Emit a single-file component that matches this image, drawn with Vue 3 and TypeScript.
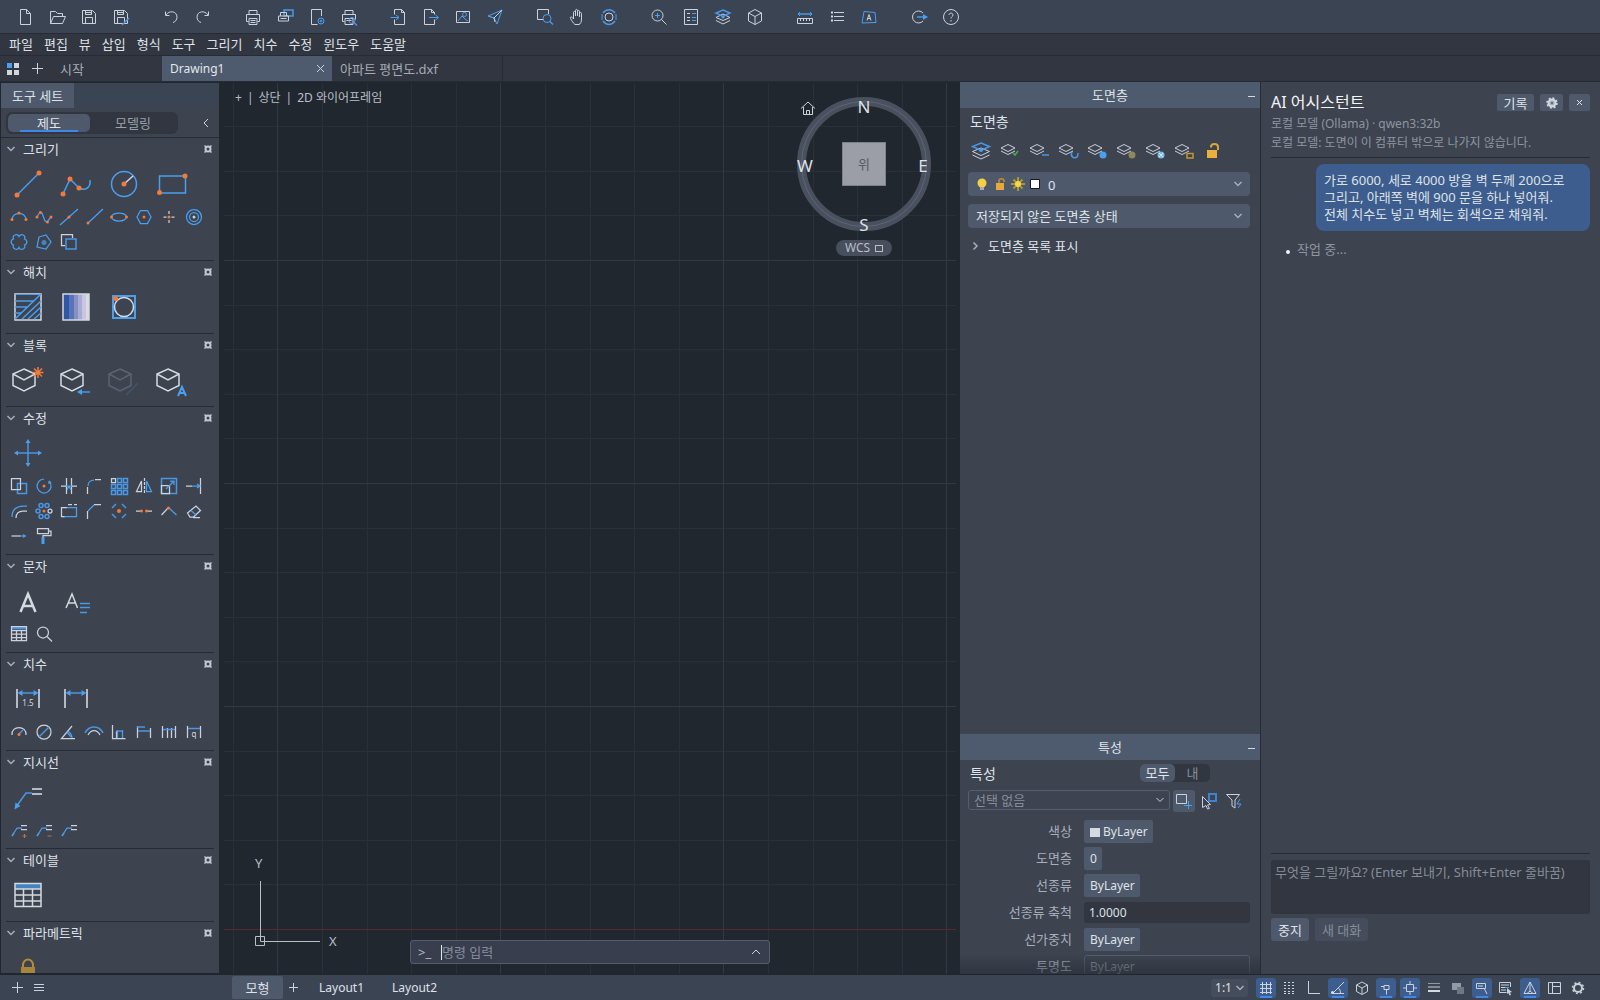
<script setup lang="ts">
import { ref } from 'vue'

interface ToolSection {
  title: string
  big: string[]
  small: string[]
}

// Toolbar glyphs, 20 x 20 grid. w = light stroke, b = blue stroke, o = orange fill.
const bar: Record<string, string> = {
  new: '<path class="w" d="M5.500 2.500h6l4 4v11h-10zM11.500 2.500v4h4"/>',
  open: '<path class="w" d="M3.500 16.500v-12h5l2 2h5v3M3.500 16.500l3-7h12l-3 7z"/>',
  save: '<path class="w" d="M3.500 3.500h10l3 3v10h-13zM6.500 3.500v4h6v-4M6.500 16.500v-6h7v6"/><path class="w" d="M6 5.500h7"/>',
  saveas: '<path class="w" d="M3.500 3.500h10l3 3v10h-13zM6.500 3.500v4h6v-4M6.500 16.500v-6h7v6"/><path class="w" d="M6 5.500h7"/><path class="b2" d="M11 18l7-7"/>',
  undo: '<path class="w" d="M4.500 4.500v4h4M5 8c3-5 11-4 11 2 0 3-1.500 4.500-4 5.500"/>',
  redo: '<path class="w" d="M15.500 4.500v4h-4M15 8c-3-5-11-4-11 2 0 3 1.500 4.500 4 5.500"/>',
  print: '<path class="w" d="M6 7.500v-4h8v4M5.500 14.500h-2v-7h13v7h-2M6 11.500h8v6H6zM7.500 13.500h5M7.500 15.500h5"/>',
  batch: '<path class="b2" d="M9 3h9v6H9z"/><path class="w" d="M5.500 9V5.500h6V9M3.500 9h10v5h-10zM5.500 11.500h6"/>',
  pageset: '<path class="w" d="M14.500 9V2.500h-10v15h6"/><circle class="b" cx="14" cy="14" r="3"/><circle class="b" cx="14" cy="14" r="1"/>',
  preview: '<path class="w" d="M6 7.500v-4h8v4M5.500 14.500h-2v-7h13v5M6 11.500h8v6H6zM7.500 13.500h5"/><circle class="b" cx="13" cy="13.500" r="3"/><path class="b2" d="M15 15.500l3 3"/>',
  import: '<path class="w" d="M5.500 7.500v-5h7l3 3v12h-10v-5M12.500 2.500v3h3"/><path class="b" d="M1.500 10.500h8M7 8l3 2.500L7 13"/>',
  export: '<path class="w" d="M13.500 7.500v-2l-3-3h-7v15h10v-5M10.500 2.500v3h3"/><path class="b" d="M8 10.500h9M14.500 8l3 2.500-3 2.500"/>',
  image: '<path class="w" d="M3.500 4.500h13v11h-13z"/><path class="b" d="M5 14l4-5 3 3 3 2"/><circle class="b" cx="11.500" cy="7.500" r="2"/>',
  send: '<path class="b" d="M3 9l14-6-5 14-3-6zM9 11l-6-2"/><path class="w" d="M17 3l-8 8 1 4"/>',
  zoomwin: '<path class="w" d="M8.500 12.500h-6v-10h11V7"/><circle class="b" cx="12" cy="11.500" r="4"/><path class="b2" d="M15 14.500l3 3"/>',
  pan: '<path class="w" d="M6.500 12V5.500c0-1.500 2-1.500 2 0V9M8.500 9V3.500c0-1.500 2-1.500 2 0V9M10.500 9V4.500c0-1.500 2-1.500 2 0V10M12.500 10V6.500c0-1.500 2-1.500 2 0V12c0 3-1 5-2.500 5.500h-4C6 16 5 14 3.500 11.500c-.8-1.500 1-2 1.800-.9L6.500 12"/>',
  orbit: '<circle class="w" cx="10" cy="10" r="4"/><path class="b2" d="M4 6C7 1.500 13 1.500 16 6M4 14c3 4.500 9 4.500 12 0"/><path class="b" d="M17 7v6M3 7v6"/>',
  zoomin: '<circle class="w" cx="8.500" cy="8.500" r="5.500"/><path class="w" d="M12.500 12.500l5 5"/><path class="b" d="M8.500 6v5M6 8.500h5"/>',
  props: '<path class="w" d="M3.500 2.500h13v15h-13z"/><path class="w" d="M6 6.500h3M6 10.500h3M6 13.500h3"/><path class="b" d="M11 6.500h4M11 10.500h4M11 13.500h4"/>',
  layers: '<path class="w" d="M10 7l7 3.500-7 3-7-3zM3 13.500l7 3.500 7-3.500"/><path class="b2" d="M10 3l7 3-7 3.500L3 6z"/><circle cx="10" cy="10" r="1.500" fill="#4a9ff0"/>',
  cube: '<path class="w" d="M10 2.500l6.500 3.500v8L10 17.500 3.500 14V6zM3.500 6L10 9.500 16.500 6M10 9.500v8"/>',
  measure: '<path class="b2" d="M3 7h14"/><path class="b" d="M5 5L3 7l2 2M15 5l2 2-2 2"/><path class="w" d="M2.500 11.500h15v5h-15zM5.500 12v2M8.500 12v2M11.500 12v2M14.500 12v2"/>',
  list: '<path class="w" d="M7 5.500h10M7 9.500h10M7 13.500h10"/><path class="w2" d="M4 5.500h2M4 9.500h2M4 13.500h2"/>',
  textfit: '<path class="b" d="M5 4.500l11 1 1 10-14 .500z"/><path class="w" d="M8 13.500l2-6 2 6M8.500 11.500h3"/>',
  logout: '<path class="w" d="M14 6a6 6 0 1 0 0 8"/><path class="b2" d="M8 10h8"/><path d="M14 7l5 3-5 3z" fill="#4a9ff0"/>',
  help: '<circle class="w" cx="10" cy="10" r="7.500"/><path class="w" d="M8 8c0-2.500 4-2.500 4 0 0 1.500-2 1.500-2 3.500"/><path class="w" d="M10 13v1.500"/>',
}

const barGroups: string[][] = [
  ['new', 'open', 'save', 'saveas'],
  ['undo', 'redo'],
  ['print', 'batch', 'pageset', 'preview'],
  ['import', 'export', 'image', 'send'],
  ['zoomwin', 'pan', 'orbit'],
  ['zoomin', 'props', 'layers', 'cube'],
  ['measure', 'list', 'textfit'],
  ['logout', 'help'],
]

const menus = ['파일', '편집', '뷰', '삽입', '형식', '도구', '그리기', '치수', '수정', '윈도우', '도움말']

const box = '<path class="wl" d="M12 5l11 5v11.500L12 27 1 21.500V10zM1 10l11 6 11-6"/>'

// Large palette glyphs, 32 x 32 grid.
const big: Record<string, string> = {
  line: '<path class="bl" d="M5 27L27 5"/><circle class="o" cx="5" cy="27" r="2.500"/><circle class="o" cx="27" cy="5" r="2.500"/>',
  pline: '<path class="bl" d="M3 26l7-15 9 9c6 3 12 0 11-8"/><circle class="o" cx="3" cy="26" r="2.500"/><circle class="o" cx="10" cy="11" r="2.500"/><circle class="o" cx="19" cy="20" r="2.500"/>',
  circle: '<circle class="bl" cx="16" cy="16" r="12.500"/><path class="wl" d="M16 16l9-8"/><circle class="o" cx="16" cy="16" r="2.500"/>',
  rect: '<path class="bl" d="M3.500 8h26v17h-26z"/><circle class="o" cx="3.500" cy="24.500" r="2.500"/><circle class="o" cx="29" cy="8" r="2.500"/>',
  hatch: '<path class="wl" d="M3 3h26v26H3z"/><path class="bl" d="M3 28L29 3M3 10h19M3 16h13M3 22h7M10 28L29 10M16 28l13-12M22 28l7-6"/><path class="b" d="M3.500 3.500h25"/>',
  gradient: '<path fill="#2f57a8" d="M3 3h6v26H3z"/><path fill="#5c72b6" d="M9 3h5v26H9z"/><path fill="#8590c5" d="M14 3h4v26h-4z"/><path fill="#a9abd4" d="M18 3h4v26h-4z"/><path fill="#cbc4e0" d="M22 3h4v26h-4z"/><path fill="#dcd9e6" d="M26 3h3v26h-3z"/><path class="wl" d="M3 3h26v26H3z"/>',
  boundary: '<path class="b3l" d="M5 5h22v22H5z"/><circle class="wl" cx="16" cy="16" r="9.500"/><circle class="o" cx="7.500" cy="7.500" r="2.500"/>',
  blockNew: box + '<path stroke="#f27a3a" stroke-width="1.500" d="M26 3v11M20.500 8.500h11M22 4.500l8 8M30 4.500l-8 8"/>',
  blockIns: box + '<path class="b2" d="M19 28h11"/><path d="M17 28l5-3v6z" fill="#4a9ff0"/>',
  blockEdit: '<g opacity=".22">' + box + '<path class="b2" d="M30 19L18 31"/></g>',
  blockAttr: box + '<path class="b3l" d="M22 32l4-9 4 9M23.500 29h5"/>',
  move: '<path class="b2" d="M16 4v24M4 16h24"/><path fill="#4a9ff0" d="M16 2l2.500 4h-5zM16 30l2.500-4h-5zM2 16l4-2.500v5zM30 16l-4-2.500v5z"/>',
  mtext: '<path class="wh" d="M8.500 27L16 9l7.500 18M11 21h10"/>',
  text: '<path class="wl" d="M6 23L12 9l5.500 14M8 18h8"/><path class="b2" d="M20 18.500h10M20 22.500h10M20 27.500h7"/>',
  dim: '<path class="w2g" d="M5 6v19M27 6v19"/><path class="b2" d="M7 10h18"/><path fill="#4a9ff0" d="M5.500 10l5-3v6zM26.500 10l-5-3v6z"/><text x="16" y="23" text-anchor="middle">1.5</text>',
  dimLin: '<path class="w2g" d="M5 6v19M27 6v19"/><path class="b2" d="M7 10h18"/><path fill="#4a9ff0" d="M5.500 10l5-3v6zM26.500 10l-5-3v6z"/>',
  leader: '<path class="b2" d="M4 26L14 12h6"/><path d="M2.500 28.500l1-7 5 3.500z" fill="#4a9ff0"/><path class="w2g" d="M20 8h10M20 13h10"/>',
  table: '<path class="b5" d="M3 7.500h26"/><path class="wl" d="M3 4.500h26v23H3zM3 10h26M3 16h26M3 22h26M11.500 10v17M20.500 10v17"/>',
  lock: '<path d="M11 15v-2a5 5.500 0 0 1 10 0v2" stroke="#b58a3a" stroke-width="2"/><path fill="#a8843c" d="M9 15h14v11H9z"/>',
}

const stackW = '<path class="w" d="M8 2.500l7 3.500-7 3.500L1 6zM1 9l7 3.500L15 9"/>'

// Small palette glyphs, 18 x 18 grid.
const small: Record<string, string> = {
  arc: '<path class="b" d="M2 12C2 3 16 3 16 12"/><circle class="o" cx="2" cy="11.500" r="1.500"/><circle class="o" cx="9" cy="5" r="1.500"/><circle class="o" cx="16" cy="11.500" r="1.500"/>',
  spline: '<path class="b" d="M2 9l3-5 2 1 3 8 2 1 4-5"/><circle class="o" cx="2" cy="9" r="1.500"/><circle class="o" cx="5.500" cy="4.500" r="1.500"/><circle class="o" cx="12.500" cy="14" r="1.500"/><circle class="o" cx="16" cy="9" r="1.500"/>',
  xline: '<path class="b" d="M0 17L18 1"/><circle class="o" cx="9" cy="9" r="1.500"/>',
  ray: '<path class="b" d="M3 15L18 1"/><circle class="o" cx="3" cy="15" r="1.500"/>',
  ellipse: '<ellipse class="b" cx="9" cy="9" rx="7.500" ry="4"/><circle class="o" cx="1.500" cy="9" r="1.500"/><circle class="o" cx="16.500" cy="9" r="1.500"/>',
  polygon: '<path class="b" d="M5.500 2.500h7l3.500 6.500-3.500 6.500h-7L2 9z"/><circle class="o" cx="9" cy="9" r="1.500"/>',
  point: '<path class="w" d="M9 3v3M9 12v3M3.500 9h3M11.500 9h3"/><circle class="o" cx="9" cy="9" r="1.500"/>',
  donut: '<circle class="b" cx="9" cy="9" r="7.500"/><circle class="b" cx="9" cy="9" r="4.500"/><circle cx="9" cy="9" r="1.500" fill="#c9d0da"/>',
  cloud: '<path class="b" d="M9 3.500A3 3 0 0 1 14.500 6A3.100 3.100 0 0 1 14.500 12A3 3 0 0 1 9 14.500A3 3 0 0 1 3.500 12A3.100 3.100 0 0 1 3.500 6A3 3 0 0 1 9 3.500z"/>',
  wipeout: '<path class="b" d="M4 4l7-2 5 7-5 7-9-2z"/><circle cx="9" cy="9.500" r="2.500" fill="#4a82bf"/>',
  copyobj: '<path class="w" d="M5 12.500H1.500v-11h11V5"/><path class="b2" d="M6 6h10v10H6z"/>',
  copy: '<path class="w" d="M7 12.500H1.500v-11h9V6"/><path class="b2" d="M7.500 6.500h9v10h-9z"/><path class="w" d="M10.500 6v6.500H7"/>',
  rotate: '<path class="b" d="M9 2a7 7 0 1 0 5 2M14 4v3M14 4l2 2"/><circle class="o" cx="9" cy="9" r="1.500"/>',
  trim: '<path class="w" d="M6.500 1v16M11.500 1v16M1 9h5M12 9h5"/><path class="b" d="M6 9h6M9 9l-2 4M9 9l2 4"/>',
  fillet: '<path class="b" d="M3 9c0-4 3-6 6-6"/><path class="w" d="M2.500 10v7M10 2.500h6"/>',
  array: '<path class="w" d="M1.500 1.500h4v4h-4z"/><path class="b2" d="M7.500 1.500h4v4h-4zM13.500 1.500h4v4h-4zM1.500 7.500h4v4h-4zM7.500 7.500h4v4h-4zM13.500 7.500h4v4h-4zM1.500 13.500h4v4h-4zM7.500 13.500h4v4h-4zM13.500 13.500h4v4h-4z"/>',
  mirror: '<path class="w" d="M6.500 4v10.500h-5z"/><path class="b" d="M11.500 4v10.500h5z"/><path class="w" stroke-dasharray="3 1" d="M9.500 1v16"/>',
  scale: '<path class="b2" d="M1.500 1.500h15v15h-15z"/><path class="w" d="M1.500 8.500h8v8h-8z"/><path class="b" d="M6 12l8-8M10 4h4v4"/>',
  extend: '<path class="w" d="M1 9h6M15.500 1v16"/><path class="b" d="M7 9h8M12 7l3 2-3 2"/>',
  offset: '<path class="b" d="M2 15c0-7 4-11 12-11h3"/><path class="w" d="M6 16c0-5 3-7 7-7h4"/>',
  arraypolar: '<circle class="b2" cx="6" cy="3.500" r="2"/><circle class="b2" cx="12" cy="3.500" r="2"/><circle class="b2" cx="3" cy="9" r="2"/><circle class="w" cx="15" cy="9" r="2"/><circle class="b2" cx="6" cy="14.500" r="2"/><circle class="b2" cx="12" cy="14.500" r="2"/><circle class="o" cx="9" cy="9" r="1.500"/>',
  stretch: '<path class="b" d="M7 5.500h9.500v9h-14"/><path class="w" d="M7 5.500H1.500v9h3M8 2.500h4M14 2.500h3"/>',
  chamfer: '<path class="b" d="M3 9l6-6"/><path class="w" d="M2.500 9v8M9 2.500h7"/>',
  explode: '<path class="b2" d="M6 2L2 6M12 2l4 4M6 16l-4-4M12 16l4-4"/><circle class="o" cx="9" cy="9" r="2"/>',
  join: '<path class="w" d="M1 9h5M12 9h5"/><circle class="o" cx="6.500" cy="9" r="1.500"/><circle class="o" cx="11.500" cy="9" r="1.500"/>',
  lengthen: '<path class="w" d="M1.500 13L8 6"/><path class="b" d="M9 6l7.500 7"/><circle class="o" cx="8.500" cy="6" r="1.500"/>',
  erase: '<path class="w" d="M2.500 11L11 4l4.500 4.500L8.500 15H5zM8 15.500h7"/><path class="b" d="M6 8.500l5 4.500"/>',
  breakline: '<path class="w" d="M1.500 9h9"/><path class="b" d="M10 9h5"/><path fill="#4a9ff0" d="M13 7l3.500 2-3.500 2z"/>',
  match: '<path class="w" d="M2.500 1.500h11v5h-11zM13.500 4h2.500v4.500H8V11"/><path fill="#4a9ff0" d="M6.500 10h3v7h-3z"/>',
  tablesm: '<path class="b3" d="M1.500 3h15"/><path class="w" d="M1.500 1.500h15v14h-15zM1.500 5.500h15M1.500 9h15M1.500 12.500h15M6.500 5v10M11.500 5v10"/>',
  find: '<circle class="w" cx="8" cy="7.500" r="5.500"/><path class="w" d="M12 11.500l5 5"/>',
  radius: '<path class="w" d="M2 12C1 2 17 2 16 12"/><path class="b2" d="M9 11l4-4"/><circle class="o" cx="9" cy="11.500" r="1.500"/>',
  diameter: '<circle class="w" cx="9" cy="9" r="7"/><path class="b2" d="M4 14L14 4"/>',
  angular: '<path class="w" d="M12 3L1.500 15.500H15"/><path class="b" d="M8 8c2 1.500 4 4 4 7M7 9l4 5"/>',
  arclen: '<path class="b2" d="M0 10C4 2 14 2 18 10"/><path class="w" d="M3 12c3-6 9-6 12 0"/>',
  ordinate: '<path class="w" d="M2.500 2v13.500h13M6.500 8v7"/><path class="b" d="M7.500 7v8M12.500 7v8M6 8h7"/>',
  baseline: '<path class="w" d="M2.500 3v12M15.500 5v10"/><path class="b2" d="M2 4h8M3 8h12"/>',
  continuous: '<path class="w" d="M2.500 3v12M7.500 5v10M11.500 5v10M15.500 3v12"/><path class="b2" d="M3 6.500h12"/>',
  quick: '<path class="w" d="M2.500 3v12M15.500 3v12"/><path class="b2" d="M3 5.500h12"/><text x="9" y="14" text-anchor="middle">q</text>',
  leadAdd: '<path class="b" d="M2 15L7 7h5"/><path class="b2" d="M2 15l2-3"/><path class="w" d="M11 4.500h6M11 8.500h6"/><path stroke="#c9703f" d="M14.500 13v4M12.500 15h4"/>',
  leadRem: '<path class="b" d="M2 15L7 7h5"/><path class="b2" d="M2 15l2-3"/><path class="w" d="M11 4.500h6M11 8.500h6"/><path stroke="#c9703f" d="M12.500 15h4"/>',
  leadAlign: '<path class="b" d="M2 15L7 7h5"/><path class="b2" d="M2 15l2-3"/><path class="w" d="M11 4.500h6M11 8.500h6"/>',
}

const sections: ToolSection[] = [
  { title: '그리기', big: ['line', 'pline', 'circle', 'rect'], small: ['arc', 'spline', 'xline', 'ray', 'ellipse', 'polygon', 'point', 'donut', 'cloud', 'wipeout', 'copyobj'] },
  { title: '해치', big: ['hatch', 'gradient', 'boundary'], small: [] },
  { title: '블록', big: ['blockNew', 'blockIns', 'blockEdit', 'blockAttr'], small: [] },
  { title: '수정', big: ['move'], small: ['copy', 'rotate', 'trim', 'fillet', 'array', 'mirror', 'scale', 'extend', 'offset', 'arraypolar', 'stretch', 'chamfer', 'explode', 'join', 'lengthen', 'erase', 'breakline', 'match'] },
  { title: '문자', big: ['mtext', 'text'], small: ['tablesm', 'find'] },
  { title: '치수', big: ['dim', 'dimLin'], small: ['radius', 'diameter', 'angular', 'arclen', 'ordinate', 'baseline', 'continuous', 'quick'] },
  { title: '지시선', big: ['leader'], small: ['leadAdd', 'leadRem', 'leadAlign'] },
  { title: '테이블', big: ['table'], small: [] },
  { title: '파라메트릭', big: ['lock'], small: [] },
]

// Layer tool glyphs, 20 x 18 grid.
const layerTools: string[] = [
  '<path class="w" d="M10 6l8.500 3.500-8.500 4-8.500-4zM1.500 13l8.500 4 8.500-4"/><path class="b2" d="M10 1l8.500 3.500L10 8.500 1.500 4.500z"/><circle cx="10" cy="8" r="2" fill="#4a9ff0"/>',
  stackW + '<path stroke="#4fa65a" stroke-width="1.500" d="M13 11l2 2 3-4"/>',
  stackW + '<path class="b2" d="M13 13h7"/>',
  stackW + '<path class="b2" d="M14 10c-2 4 1 7 5 5 1-1 1-3 1-4"/>',
  stackW + '<circle cx="16" cy="13" r="3.500" fill="#4a9ff0"/>',
  stackW + '<circle cx="16" cy="13" r="3.500" fill="#8a8a5c"/>',
  stackW + '<circle cx="16" cy="13" r="3.500" fill="#7fbbe8"/><path stroke="#d5e8f7" d="M14 11l4 4M18 11l-4 4"/>',
  stackW + '<path stroke="#c4953a" stroke-width="1.500" d="M13 11.500h6v4.500h-6z"/>',
  '<path stroke="#d9a63c" stroke-width="2" d="M8 5.500V5c0-4 7-4 7 0v3"/><path fill="#e9b03c" d="M4 8h10v8H4z"/>',
]

// Status bar toggles, 20 x 20 grid.
const toggles: { on: boolean; art: string }[] = [
  { on: true, art: '<path class="w" d="M6.500 4v12M10.500 4v12M14.500 4v12M4 6.500h12M4 10.500h12M4 14.500h12"/>' },
  { on: false, art: '<path class="w" stroke-dasharray="2 2" d="M4 4.500h12M4 7.500h12M4 10.500h12M4 13.500h12M4 15.500h12"/>' },
  { on: false, art: '<path class="w" d="M4.500 3v12.500H16"/>' },
  { on: true, art: '<path class="w" d="M16 4L4.500 15.500H16M10 9.500c2 1.500 2.500 3.500 2.500 6"/><circle cx="4.500" cy="14.500" r="1.500" fill="#dfe3ea"/>' },
  { on: false, art: '<path class="w" d="M10 4l5.500 3v6.500L10 16.500l-5.500-3V7zM4.500 7L10 10l5.500-3M10 10v6"/>' },
  { on: true, art: '<path class="w" d="M5 8.500h3M10.500 12v4.500M8 7.500h5v4H8z"/>' },
  { on: true, art: '<path class="w" d="M6.500 6.500h7v7h-7zM10 3v3M10 14v3M3 10h3M14 10h3"/>' },
  { on: false, art: '<path stroke="#9299a6" d="M4 5.500h12"/><path class="w" d="M4 9h12"/><path class="w3" d="M4 13h12"/>' },
  { on: false, art: '<path fill="#9399a5" d="M4 5h9v7H4z"/><path fill="#6f7684" d="M9 9h7v7H9z"/>' },
  { on: true, art: '<path class="w" d="M4.500 5.500h9v5h-9zM6 8h5M12 10l3 6"/>' },
  { on: false, art: '<path class="w" d="M14.500 9V4.500h-11v10h7M5 7h8M5 9.500h8M5 12h5"/><path class="b" d="M9 9.500h4"/><path fill="#c9d0da" d="M11 10l5 4-2 .500 1 2.500-1.500.500-1-2.500-1.500 1z"/>' },
  { on: true, art: '<path class="w" d="M10 4l6 11.500H4zM10 4v9M10 13l-3 2.500M10 13l3 2.500"/>' },
  { on: false, art: '<path class="w" d="M4.500 4.500h12v11h-12zM8.500 4.500v11M8.500 8.500h8"/>' },
  { on: false, art: '<circle cx="10" cy="10" r="4" stroke="#c9d0da" stroke-width="2"/><circle cx="10" cy="10" r="5.500" stroke="#c9d0da" stroke-width="1.500" stroke-dasharray="2 2.300"/>' },
]

const linetypeScale = ref('1.0000')
</script>

<template>
  <div class="app">
    <header class="toolbar">
      <div v-for="(g, i) in barGroups" :key="i" class="group">
        <button v-for="n in g" :key="n" class="tool" :aria-label="n">
          <svg class="ic" width="20" height="20" viewBox="0 0 20 20" v-html="bar[n]" />
        </button>
      </div>
    </header>

    <nav class="menubar">
      <button v-for="m in menus" :key="m">{{ m }}</button>
    </nav>

    <div class="tabs">
      <button class="home" aria-label="apps">
        <svg width="12" height="12" viewBox="0 0 12 12"><path fill="#4a9ff0" d="M0 0h5v5H0z" /><path fill="#d0d4db" d="M7 0h5v5H7zM0 7h5v5H0zM7 7h5v5H7z" /></svg>
      </button>
      <button class="add" aria-label="new tab">
        <svg class="ic" width="11" height="11" viewBox="0 0 11 11"><path class="w" d="M5.500 0v11M0 5.500h11" /></svg>
      </button>
      <button class="tab start">시작</button>
      <div class="tab active">
        <span class="latin">Drawing1</span>
        <button aria-label="close">
          <svg class="ic" width="9" height="9" viewBox="0 0 9 9"><path class="w" d="M1 1l7 7M8 1L1 8" /></svg>
        </button>
      </div>
      <button class="tab file">아파트 평면도.dxf</button>
    </div>

    <main class="work">
      <aside class="tools">
        <div class="tools-head"><span>도구 세트</span></div>
        <div class="mode">
          <div class="seg">
            <button class="on">제도</button>
            <button>모델링</button>
          </div>
          <button class="collapse" aria-label="collapse">
            <svg class="ic" width="6" height="10" viewBox="0 0 6 10"><path class="w" d="M5 1L1 5l4 4" /></svg>
          </button>
        </div>
        <div class="sections">
          <section v-for="s in sections" :key="s.title">
            <h3>
              <svg class="ic" width="8" height="6" viewBox="0 0 8 6"><path class="g" d="M.5 1L4 4.500 7.500 1" /></svg>
              <span>{{ s.title }}</span>
              <svg width="8" height="8" viewBox="0 0 8 8" fill="none"><circle cx="4" cy="4" r="2.500" stroke="#c3cad4" stroke-width="2" /><path stroke="#c3cad4" stroke-width="1.500" d="M.5.500l1.500 1.500M7.500.500L6 2M.5 7.500L2 6M7.500 7.500L6 6" /></svg>
            </h3>
            <div class="bigs">
              <button v-for="n in s.big" :key="n" :aria-label="n">
                <svg class="ic" width="32" height="32" viewBox="0 0 32 32" v-html="big[n]" />
              </button>
            </div>
            <div v-if="s.small.length" class="smalls">
              <button v-for="n in s.small" :key="n" :aria-label="n">
                <svg class="ic" width="18" height="18" viewBox="0 0 18 18" v-html="small[n]" />
              </button>
            </div>
          </section>
        </div>
      </aside>

      <div class="canvas">
        <div class="grid"></div>
        <div class="viewlabel"><span>+</span><span>|</span><span>상단</span><span>|</span><span>2D 와이어프레임</span></div>

        <div class="compass">
          <svg class="ring" width="134" height="134" viewBox="0 0 134 134" fill="none">
            <circle cx="67" cy="67" r="62.500" stroke="#49515f" stroke-width="9" />
            <circle cx="67" cy="67" r="62.500" stroke="#5c6676" />
          </svg>
          <svg class="house ic" width="14" height="14" viewBox="0 0 14 14"><path class="w" d="M0 7.500L7 1l7 6.500M2.500 6v7.500h9V6M5.500 13V9.500h3V13" /></svg>
          <b class="n">N</b><b class="s">S</b><b class="e">E</b><b class="w">W</b>
          <button class="top">위</button>
          <button class="wcs">WCS <i></i></button>
        </div>

        <div class="ucs">
          <span>Y</span>
          <svg width="66" height="66" viewBox="0 0 66 66" fill="none" stroke="#b9bfc9"><path d="M5.500 0v60.500H65M.5 55.500h9v9h-9z" /></svg>
          <span class="x">X</span>
        </div>

        <div class="command">
          <span class="prompt">&gt;_</span>
          <i class="caret"></i>
          <input aria-label="명령" placeholder="명령 입력" />
          <svg class="ic" width="10" height="6" viewBox="0 0 10 6"><path class="w" d="M1 5l4-4 4 4" /></svg>
        </div>
      </div>

      <aside class="palettes">
        <section class="layers">
          <h2>도면층<button aria-label="minimize"></button></h2>
          <h4>도면층</h4>
          <div class="layer-tools">
            <button v-for="(a, i) in layerTools" :key="i" :aria-label="'layer ' + i">
              <svg class="ic" width="20" height="18" viewBox="0 0 20 18" v-html="a" />
            </button>
          </div>
          <button class="drop">
            <svg width="72" height="16" viewBox="0 0 72 16" fill="none">
              <circle cx="6" cy="7" r="4.500" fill="#f7cf3f" /><path fill="#a7abb5" d="M4 11h4v3H4z" />
              <path stroke="#c08d2c" stroke-width="1.500" d="M23 7V5c0-3 5-3 5 0v1" /><path fill="#e9a83a" d="M20 7h8v7h-8z" />
              <path stroke="#a8953d" stroke-width="2" d="M42 1v14M35 8h14M37.500 3.500l9 9M46.500 3.500l-9 9" /><circle cx="42" cy="8" r="3" fill="#f9d648" />
              <path fill="#fff" stroke="#15181d" d="M54.500 3.500h9v9h-9z" />
            </svg>
            <span class="latin">0</span>
            <svg class="ic chev" width="8" height="6" viewBox="0 0 8 6"><path class="g" d="M.5 1L4 4.500 7.500 1" /></svg>
          </button>
          <button class="drop">
            <span>저장되지 않은 도면층 상태</span>
            <svg class="ic chev" width="8" height="6" viewBox="0 0 8 6"><path class="g" d="M.5 1L4 4.500 7.500 1" /></svg>
          </button>
          <button class="expand">
            <svg class="ic" width="5" height="8" viewBox="0 0 5 8"><path class="g" d="M.5.5L4 4 .5 7.500" /></svg>
            <span>도면층 목록 표시</span>
          </button>
        </section>

        <section class="props">
          <h2>특성<button aria-label="minimize"></button></h2>
          <div class="props-title">
            <h4>특성</h4>
            <div class="pick"><button class="on">모두</button><button>내</button></div>
          </div>
          <div class="selrow">
            <div class="selwrap">
              <select aria-label="선택"><option>선택 없음</option></select>
              <svg class="ic" width="8" height="6" viewBox="0 0 8 6"><path class="w" d="M.5 1L4 4.500 7.500 1" /></svg>
            </div>
            <button class="on" aria-label="add to selection"><svg class="ic" width="18" height="18" viewBox="0 0 18 18"><path class="w" d="M1.500 2.500h10v9h-10z" /><path class="b" d="M13.500 9v8M9 13.500h8" /></svg></button>
            <button aria-label="select objects"><svg class="ic" width="18" height="18" viewBox="0 0 18 18"><path stroke="#3f83cf" stroke-width="2" d="M9 2h7v7H9z" /><path fill="#3c424f" stroke="#c9d0da" d="M2.500 4.500l8 8-3 .500 2 3.500-2 .500-1.500-3.500-3.500 2z" /></svg></button>
            <button aria-label="quick select"><svg class="ic" width="18" height="18" viewBox="0 0 18 18"><path class="w" d="M1.500 2.500h13L10 8v8l-3-2V8z" /><path class="b" d="M15 7l-3 5h4l-3 4" /></svg></button>
          </div>
          <dl>
            <dt>색상</dt><dd><button class="latin"><i></i>ByLayer</button></dd>
            <dt>도면층</dt><dd><button class="latin">0</button></dd>
            <dt>선종류</dt><dd><button class="latin">ByLayer</button></dd>
            <dt><label for="lts">선종류 축척</label></dt><dd><input id="lts" v-model="linetypeScale" class="latin" /></dd>
            <dt>선가중치</dt><dd><button class="latin">ByLayer</button></dd>
            <dt><label for="trans">투명도</label></dt><dd><input id="trans" class="latin ghost" placeholder="ByLayer" /></dd>
          </dl>
        </section>
      </aside>

      <aside class="ai">
        <div class="ai-head">
          <h1>AI 어시스턴트</h1>
          <button>기록</button>
          <button class="sq" aria-label="settings"><svg width="12" height="12" viewBox="0 0 12 12" fill="none"><circle cx="6" cy="6" r="3.500" fill="#a3aab6" stroke="#d5d9e0" stroke-width="2" /><circle cx="6" cy="6" r="5" stroke="#d5d9e0" stroke-width="1.500" stroke-dasharray="2 1.900" /><circle cx="6" cy="6" r="1" fill="#4e586a" /></svg></button>
          <button class="cl" aria-label="close"><svg width="7" height="7" viewBox="0 0 7 7" stroke="#dfe3ea"><path d="M1 1l5 5M6 1L1 6" /></svg></button>
        </div>
        <p class="meta">로컬 모델 (Ollama) · qwen3:32b</p>
        <p class="meta note">로컬 모델: 도면이 이 컴퓨터 밖으로 나가지 않습니다.</p>
        <div class="chat">
          <div class="bubble">가로 6000, 세로 4000 방을 벽 두께 200으로<br />그리고, 아래쪽 벽에 900 문을 하나 넣어줘.<br />전체 치수도 넣고 벽체는 회색으로 채워줘.</div>
          <div class="working"><i></i><span>작업 중...</span></div>
        </div>
        <div class="compose">
          <textarea aria-label="메시지" placeholder="무엇을 그릴까요? (Enter 보내기, Shift+Enter 줄바꿈)"></textarea>
          <div class="acts"><button>중지</button><button disabled>새 대화</button></div>
        </div>
      </aside>
    </main>

    <footer class="status">
      <div class="st-left">
        <button aria-label="add"><svg class="ic" width="11" height="11" viewBox="0 0 11 11"><path class="w" d="M5.500 0v11M0 5.500h11" /></svg></button>
        <button aria-label="menu"><svg class="ic" width="10" height="9" viewBox="0 0 10 9"><path class="w" d="M0 1.500h10M0 4.500h10M0 7.500h10" /></svg></button>
      </div>
      <button class="lay on">모형</button>
      <button class="plus" aria-label="add layout"><svg class="ic" width="9" height="9" viewBox="0 0 9 9"><path class="w" d="M4.500 0v9M0 4.500h9" /></svg></button>
      <button class="lay latin">Layout1</button>
      <button class="lay latin">Layout2</button>
      <div class="toggles">
        <button class="scale latin">1:1 <svg class="ic" width="8" height="6" viewBox="0 0 8 6"><path class="g" d="M.5 1L4 4.500 7.500 1" /></svg></button>
        <button v-for="(t, i) in toggles" :key="i" class="tg" :class="{ on: t.on }" :aria-label="'toggle ' + i">
          <svg class="ic" width="20" height="20" viewBox="0 0 20 20" v-html="t.art" />
        </button>
      </div>
    </footer>
  </div>
</template>

<style>
html,
body {
  margin: 0;
  background: #21272f;
}
</style>

<style scoped>
.app {
  display: flex;
  flex-direction: column;
  height: 100vh;
  overflow: hidden;
  background: #21272f;
  color: #dfe2e8;
  font: 13px/18px 'Noto Sans', 'Noto Sans CJK KR', sans-serif;
}
* {
  box-sizing: border-box;
}
button {
  display: inline-flex;
  align-items: center;
  justify-content: center;
  margin: 0;
  padding: 0;
  border: 0;
  background: none;
  color: inherit;
  font: inherit;
  white-space: nowrap;
}
input,
textarea,
select {
  margin: 0;
  border: 0;
  outline: 0;
  color: inherit;
  font: inherit;
}
h1,
h2,
h3,
h4,
p,
dl,
dd {
  margin: 0;
  font-weight: 400;
}
i,
b {
  font-style: normal;
  font-weight: 400;
}
svg {
  display: block;
  flex: none;
}
.latin {
  font-size: 12px;
}
.ic {
  fill: none;
  overflow: visible;
}
.ic :deep(.w),
.ic .w {
  stroke: #ccd2dc;
}
.ic .g {
  stroke: #a7aebb;
  stroke-width: 1.5;
}
.ic :deep(.wl) {
  stroke: #d5d9e0;
  stroke-width: 1.5;
}
.ic :deep(.wh) {
  stroke: #d5d9e0;
  stroke-width: 2.5;
}
.ic :deep(.w2),
.ic :deep(.w3) {
  stroke: #d5d9e0;
  stroke-width: 2;
}
.ic :deep(.w2g) {
  stroke: #b4bac5;
  stroke-width: 2;
}
.ic :deep(.b),
.ic .b {
  stroke: #4a9ff0;
}
.ic :deep(.bl) {
  stroke: #4a9ff0;
  stroke-width: 1.5;
}
.ic :deep(.b2) {
  stroke: #4a97e4;
  stroke-width: 1.5;
}
.ic :deep(.b3l) {
  stroke: #4a9ff0;
  stroke-width: 2;
}
.ic :deep(.b3) {
  stroke: #4a8ed4;
  stroke-width: 3;
}
.ic :deep(.b5) {
  stroke: #4583c0;
  stroke-width: 5;
}
.ic :deep(.o) {
  fill: #f27a3a;
}
.ic :deep(text) {
  fill: #d5d9e0;
  font-size: 8px;
}
.smalls .ic :deep(.w),
.smalls .ic :deep(.b) {
  stroke-width: 1.25;
}

.toolbar {
  display: flex;
  flex: none;
  gap: 18px;
  height: 34px;
  padding-left: 9px;
  border-bottom: 1px solid #262c35;
  background: #3b4453;
}
.group {
  display: flex;
}
.tool {
  width: 32px;
  height: 34px;
}
.menubar {
  display: flex;
  flex: none;
  gap: 11px;
  height: 22px;
  padding: 0 0 1px 9px;
  border-bottom: 1px solid #262c35;
  background: #313640;
}
.tabs {
  display: flex;
  flex: none;
  height: 26px;
  border-bottom: 1px solid #262c35;
  background: #313640;
  color: #a5abb6;
}
.home {
  width: 26px;
}
.add {
  width: 22px;
}
.tab {
  display: flex;
  align-items: center;
  justify-content: flex-start;
  width: 170px;
  padding: 0 7px 0 8px;
}
.start {
  width: 114px;
  padding-left: 12px;
}
.active {
  justify-content: space-between;
  background: #4e5b6e;
  color: #e3e6eb;
}
.active span {
  padding-top: 1px;
}
.file {
  width: 171px;
  border-right: 1px solid #262c35;
}

.work {
  display: flex;
  flex: 1;
  min-height: 0;
  border-bottom: 1px solid #20262e;
}
.tools {
  display: flex;
  flex: none;
  flex-direction: column;
  width: 218px;
  margin: 1px 5px 1px 1px;
  overflow: hidden;
  background: #3d434f;
}
.tools-head {
  display: flex;
  flex: none;
  height: 25px;
  background: #3b4453;
}
.tools-head span {
  display: flex;
  align-items: center;
  padding: 0 11px;
  background: #4e5a6c;
}
.mode {
  display: flex;
  flex: none;
  align-items: center;
  height: 30px;
  padding: 0 10px 0 5px;
  border-bottom: 1px solid #262c35;
}
.seg {
  display: flex;
  width: 172px;
  height: 22px;
  padding: 2px;
  border-radius: 6px;
  background: #313640;
  color: #9aa1ad;
}
.seg button {
  flex: 1;
  line-height: 16px;
}
.seg .on {
  position: relative;
  flex: none;
  width: 82px;
  border-radius: 5px;
  background: #4e5a6c;
  color: #e3e6eb;
}
.seg .on::after {
  position: absolute;
  right: 12px;
  bottom: 0;
  left: 12px;
  height: 2px;
  background: #3f87e8;
  content: '';
}
.collapse {
  margin-left: auto;
}
.sections {
  flex: 1;
  min-height: 0;
  overflow: hidden;
}
.sections section::after {
  display: block;
  height: 1px;
  margin: 5px 5px 0;
  background: #262c35;
  content: '';
}
h3 {
  display: flex;
  align-items: center;
  height: 24px;
  padding: 0 7px 2px 6px;
  font-size: 13px;
}
h3 span {
  flex: 1;
  padding-left: 8px;
}
.bigs {
  display: flex;
  padding-left: 3px;
}
.bigs button {
  width: 48px;
  height: 43px;
}
.smalls {
  display: flex;
  flex-wrap: wrap;
  padding-left: 6px;
}
.smalls button {
  width: 25px;
  height: 25px;
  padding: 3px 4px 4px 3px;
}

.canvas {
  position: relative;
  flex: 1;
  min-width: 0;
  margin-right: 4px;
  background: #21272f;
}
.grid {
  position: absolute;
  inset: 1px 0 0;
  overflow: hidden;
  background:
    linear-gradient(#59282f, #59282f) 0 846px / 100% 1px no-repeat,
    linear-gradient(90deg, #323945 1px, transparent 1px) 53px 0 / 223px 223px,
    linear-gradient(#323945 1px, transparent 1px) 0 177px / 223px 223px,
    linear-gradient(90deg, #29303a 1px, transparent 1px) 98px 0 / 223px 223px,
    linear-gradient(90deg, #29303a 1px, transparent 1px) 143px 0 / 223px 223px,
    linear-gradient(90deg, #29303a 1px, transparent 1px) 187px 0 / 223px 223px,
    linear-gradient(90deg, #29303a 1px, transparent 1px) 9px 0 / 223px 223px,
    linear-gradient(#29303a 1px, transparent 1px) 0 222px / 223px 223px,
    linear-gradient(#29303a 1px, transparent 1px) 0 43px / 223px 223px,
    linear-gradient(#29303a 1px, transparent 1px) 0 88px / 223px 223px,
    linear-gradient(#29303a 1px, transparent 1px) 0 132px / 223px 223px;
}
.viewlabel {
  position: absolute;
  top: 7px;
  left: 11px;
  display: flex;
  gap: 5px;
  color: #b9bfc9;
  font-size: 12px;
}
.compass {
  position: absolute;
  top: 15px;
  right: 25px;
  width: 134px;
  height: 160px;
}
.ring {
  position: absolute;
  top: 0;
  left: 0;
}
.house {
  position: absolute;
  top: 4px;
  left: 4px;
}
.compass b {
  position: absolute;
  width: 18px;
  font-size: 17px;
  line-height: 20px;
  text-align: center;
}
.n {
  top: 0;
  left: 58px;
}
.s {
  top: 118px;
  left: 58px;
}
.e {
  top: 59px;
  left: 117px;
}
.compass .w {
  top: 59px;
  left: -1px;
}
.top {
  position: absolute;
  top: 45px;
  left: 45px;
  width: 44px;
  height: 44px;
  border: 1px solid #7d818c;
  background: #9b9da7;
  color: #555a64;
}
.wcs {
  position: absolute;
  top: 143px;
  left: 39px;
  gap: 5px;
  width: 56px;
  height: 16px;
  border-radius: 8px;
  background: #474e5c;
  color: #b9bfc9;
  font-size: 12px;
}
.wcs i {
  width: 8px;
  height: 7px;
  border: 1px solid #b9bfc9;
}
.ucs {
  position: absolute;
  bottom: 27px;
  left: 31px;
  display: grid;
  grid-template-columns: 66px 20px;
  color: #b9bfc9;
  font-size: 13px;
}
.ucs > span:first-child {
  grid-column: 1 / 3;
  height: 27px;
}
.ucs .x {
  align-self: end;
  padding-left: 8px;
  line-height: 12px;
}
.command {
  position: absolute;
  bottom: 10px;
  left: 50%;
  display: flex;
  align-items: center;
  width: 360px;
  height: 24px;
  margin-left: -180px;
  padding: 0 8px 0 7px;
  border: 1px solid #525d70;
  border-radius: 3px;
  background: #383e4d;
}
.prompt {
  width: 23px;
  color: #b9bfc9;
  font-size: 13px;
}
.caret {
  width: 1px;
  height: 15px;
  background: #e8eaee;
}
.command input {
  flex: 1;
  min-width: 0;
  padding: 0;
  background: none;
}
::placeholder {
  color: #868d9a;
  opacity: 1;
}

.palettes {
  display: flex;
  flex: none;
  flex-direction: column;
  width: 300px;
  overflow: hidden;
  background: #3d434f;
}
h2 {
  position: relative;
  height: 26px;
  background: #4e5b6e;
  font-size: 13px;
  line-height: 27px;
  text-align: center;
}
h2 button {
  position: absolute;
  top: 14px;
  right: 5px;
  width: 7px;
  height: 1px;
  background: #d5d9e0;
}
h4 {
  padding-left: 10px;
  font-size: 14px;
  line-height: 20px;
}
.layers {
  flex: 1;
  min-height: 0;
}
.layers h4 {
  padding-top: 4px;
}
.layer-tools {
  display: flex;
  padding: 9px 0 12px 6px;
}
.layer-tools button {
  width: 29px;
  height: 19px;
}
.drop {
  display: flex;
  width: 282px;
  height: 24px;
  margin: 0 0 8px 8px;
  padding: 0 8px;
  border-radius: 4px;
  background: #4e5a6c;
}
.drop .chev {
  margin-left: auto;
}
.drop .latin {
  padding: 2px 0 0;
  font-size: 13px;
}
.expand {
  gap: 10px;
  height: 20px;
  padding-left: 13px;
}
.props {
  position: relative;
  flex: none;
  height: 240px;
  overflow: hidden;
}
.props::after {
  position: absolute;
  right: 0;
  bottom: 0;
  left: 0;
  height: 20px;
  background: linear-gradient(rgba(38, 43, 52, 0), rgba(38, 43, 52, 0.6));
  content: '';
}
.props-title {
  display: flex;
  justify-content: space-between;
  height: 30px;
  padding: 4px 50px 0 0;
}
.pick {
  display: flex;
  width: 70px;
  height: 18px;
  border-radius: 5px;
  background: #313640;
  color: #868d9a;
}
.pick button {
  flex: 1;
  font-size: 13px;
  line-height: 16px;
}
.pick .on {
  border-radius: 5px;
  background: #4e5a6c;
  color: #e3e6eb;
}
.selrow {
  display: flex;
  gap: 3px;
  height: 22px;
  padding-left: 8px;
}
.selwrap {
  position: relative;
  width: 202px;
  height: 20px;
}
.selwrap svg {
  position: absolute;
  top: 7px;
  right: 6px;
}
select {
  width: 100%;
  height: 20px;
  padding: 0 5px;
  border: 1px solid #525f73;
  border-radius: 3px;
  background: none;
  color: #868d9a;
  appearance: none;
}
.selrow button {
  width: 22px;
  height: 22px;
  border-radius: 3px;
}
.selrow button.on {
  background: #4e5a6c;
}
dl {
  display: grid;
  grid-template-columns: 112px 166px;
  grid-auto-rows: 23px;
  row-gap: 4px;
  column-gap: 12px;
  padding-top: 8px;
}
dt {
  color: #a7aebb;
  line-height: 23px;
  text-align: right;
}
dd {
  display: flex;
  align-items: center;
}
dd button {
  gap: 3px;
  height: 23px;
  padding: 1px 5px 0 6px;
  border-radius: 2px;
  background: #4e5a6c;
}
dd button i {
  width: 10px;
  height: 9px;
  background: #d5d9e0;
}
dd input {
  width: 166px;
  height: 21px;
  padding: 0 5px;
  border-radius: 3px;
  background: #313640;
}
dd .ghost {
  height: 23px;
  border: 1px solid #525f73;
  background: none;
}

.ai {
  display: flex;
  flex: none;
  flex-direction: column;
  width: 340px;
  padding: 11px 10px 33px;
  border-left: 1px solid #262c35;
  background: #3d434f;
}
.ai-head {
  display: flex;
  gap: 6px;
  height: 21px;
}
h1 {
  flex: 1;
  color: #f3f4f6;
  font-size: 16px;
}
.ai-head button {
  width: 37px;
  height: 17px;
  margin-top: 1px;
  border-radius: 2px;
  background: #4e5a6c;
  line-height: 16px;
}
.ai-head .sq {
  width: 23px;
}
.ai-head .cl {
  width: 21px;
}
.meta {
  color: #8e95a1;
  font-size: 12px;
  line-height: 19px;
}
.note {
  padding-bottom: 5px;
  border-bottom: 1px solid #262c35;
}
.chat {
  flex: 1;
}
.bubble {
  width: 274px;
  margin: 6px 0 0 auto;
  padding: 8px;
  border-radius: 8px;
  background: #3c5d8e;
  line-height: 17px;
}
.working {
  display: flex;
  align-items: center;
  gap: 7px;
  margin: 9px 0 0 15px;
  color: #8e95a1;
}
.working i {
  width: 4px;
  height: 4px;
  margin-top: 5px;
  border-radius: 2px;
  background: #f3f4f6;
}
.compose {
  padding-top: 6px;
  border-top: 1px solid #262c35;
}
textarea {
  display: block;
  width: 100%;
  height: 54px;
  padding: 3px 4px;
  border-radius: 3px;
  background: #313640;
  font-size: 13px;
  resize: none;
}
.acts {
  display: flex;
  gap: 6px;
  margin-top: 4px;
}
.acts button {
  height: 23px;
  padding: 0 7px;
  border-radius: 3px;
  background: #4e5a6c;
}
.acts button:disabled {
  background: #454d5c;
  color: #868d9a;
}

.status {
  display: flex;
  flex: none;
  align-items: center;
  height: 25px;
  background: #3b4453;
}
.st-left {
  display: flex;
  gap: 11px;
  width: 232px;
  padding-left: 12px;
}
.lay {
  height: 23px;
  margin-right: 12px;
  padding: 1px 8px 0;
}
.lay.on {
  width: 51px;
  margin: 0;
  border-radius: 2px;
  background: #4e5a6c;
}
.plus {
  width: 21px;
  margin-right: 7px;
}
.toggles {
  display: flex;
  align-items: center;
  gap: 4px;
  margin-left: auto;
  padding-right: 12px;
}
.scale {
  gap: 4px;
  width: 37px;
  height: 18px;
  margin-right: 4px;
  border-radius: 3px;
  background: #454d5c;
}
.tg {
  position: relative;
  width: 20px;
  height: 20px;
  border-radius: 3px;
}
.tg.on {
  background: #3c5d8e;
}
.tg.on::after {
  position: absolute;
  right: 4px;
  bottom: 0;
  left: 4px;
  height: 2px;
  background: #3f87e8;
  content: '';
}
</style>
